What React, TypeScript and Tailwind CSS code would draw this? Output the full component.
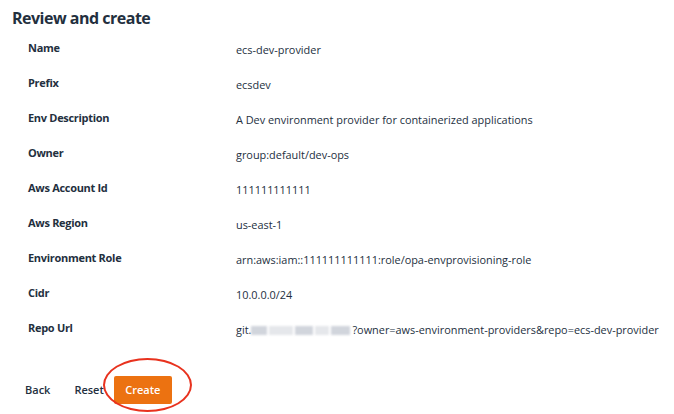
import React from 'react';

const rows: { label: string; value: React.ReactNode }[] = [
  { label: 'Name', value: 'ecs-dev-provider' },
  { label: 'Prefix', value: 'ecsdev' },
  { label: 'Env Description', value: 'A Dev environment provider for containerized applications' },
  { label: 'Owner', value: 'group:default/dev-ops' },
  { label: 'Aws Account Id', value: '111111111111' },
  { label: 'Aws Region', value: 'us-east-1' },
  { label: 'Environment Role', value: 'arn:aws:iam::111111111111:role/opa-envprovisioning-role' },
  { label: 'Cidr', value: '10.0.0.0/24' },
  {
    label: 'Repo Url',
    value: (
      <span className="flex items-center">
        git.
        <span className="flex h-[9px] w-[101px] gap-[2px] blur-[1px]">
          <span className="w-[16px] bg-gray-300" />
          <span className="w-[24px] bg-gray-200" />
          <span className="w-[18px] bg-gray-300" />
          <span className="w-[14px] bg-gray-200" />
          <span className="w-[19px] bg-gray-300" />
        </span>
        ?owner=aws-environment-providers&amp;repo=ecs-dev-provider
      </span>
    ),
  },
];

export default function App() {
  return (
    <div className="h-[414px] w-[674px] bg-white font-['Open_Sans',sans-serif] text-[#16191f]">
      <h1 className="pl-[12px] pt-[6px] text-[16px] font-bold leading-[24px] tracking-[-0.5px] text-[#232f3e]">
        Review and create
      </h1>
      <div className="mt-[11px] flex flex-col">
        {rows.map((r) => (
          <div key={r.label} className="flex h-[35px] leading-[14px]">
            <div className="w-[236px] pl-[28px] text-[11px] font-bold tracking-[-0.3px] text-[#232f3e]">{r.label}</div>
            <div className="pt-[2px] text-[10.9px] text-[#232f3e]">{r.value}</div>
          </div>
        ))}
      </div>
      <div className="mt-[20px] flex items-center pl-[25px] text-[11px] font-semibold text-[#232f3e]">
        <button className="mr-[24px]">Back</button>
        <button className="mr-[10px]">Reset</button>
        <div className="relative">
          <button className="h-[28px] w-[58px] rounded-[2px] bg-[#ec7211] text-white">Create</button>
          <div className="pointer-events-none absolute left-[-11px] top-[-18px] h-[54px] w-[89px] rounded-[50%] border-[2px] border-[#e8321e]" />
        </div>
      </div>
    </div>
  );
}
